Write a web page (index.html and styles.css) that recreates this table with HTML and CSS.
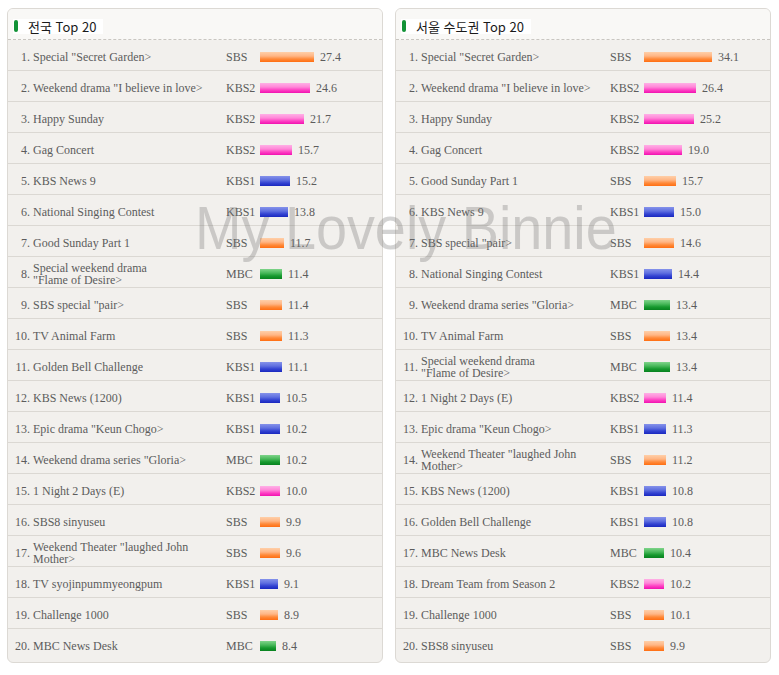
FILE: index.html
```html
<!DOCTYPE html>
<html lang="ko">
<head>
<meta charset="utf-8">
<title>Top 20</title>
<link rel="stylesheet" href="styles.css">
</head>
<body>
<div class="page">
  <section class="panel">
    <header class="panel-head"><span class="label"><i class="pill"></i>전국 Top 20</span></header>
    <div class="rows">
      <div class="row"><span class="num">1.</span><span class="title">Special "Secret Garden&gt;</span><span class="ch">SBS</span><span class="val"><i class="bar sbs" style="width:54px"></i>27.4</span></div>
      <div class="row"><span class="num">2.</span><span class="title">Weekend drama "I believe in love&gt;</span><span class="ch">KBS2</span><span class="val"><i class="bar kbs2" style="width:50px"></i>24.6</span></div>
      <div class="row"><span class="num">3.</span><span class="title">Happy Sunday</span><span class="ch">KBS2</span><span class="val"><i class="bar kbs2" style="width:44px"></i>21.7</span></div>
      <div class="row"><span class="num">4.</span><span class="title">Gag Concert</span><span class="ch">KBS2</span><span class="val"><i class="bar kbs2" style="width:32px"></i>15.7</span></div>
      <div class="row"><span class="num">5.</span><span class="title">KBS News 9</span><span class="ch">KBS1</span><span class="val"><i class="bar kbs1" style="width:30px"></i>15.2</span></div>
      <div class="row"><span class="num">6.</span><span class="title">National Singing Contest</span><span class="ch">KBS1</span><span class="val"><i class="bar kbs1" style="width:28px"></i>13.8</span></div>
      <div class="row"><span class="num">7.</span><span class="title">Good Sunday Part 1</span><span class="ch">SBS</span><span class="val"><i class="bar sbs" style="width:24px"></i>11.7</span></div>
      <div class="row"><span class="num">8.</span><span class="title">Special weekend drama<br>"Flame of Desire&gt;</span><span class="ch">MBC</span><span class="val"><i class="bar mbc" style="width:22px"></i>11.4</span></div>
      <div class="row"><span class="num">9.</span><span class="title">SBS special "pair&gt;</span><span class="ch">SBS</span><span class="val"><i class="bar sbs" style="width:22px"></i>11.4</span></div>
      <div class="row"><span class="num">10.</span><span class="title">TV Animal Farm</span><span class="ch">SBS</span><span class="val"><i class="bar sbs" style="width:22px"></i>11.3</span></div>
      <div class="row"><span class="num">11.</span><span class="title">Golden Bell Challenge</span><span class="ch">KBS1</span><span class="val"><i class="bar kbs1" style="width:22px"></i>11.1</span></div>
      <div class="row"><span class="num">12.</span><span class="title">KBS News (1200)</span><span class="ch">KBS1</span><span class="val"><i class="bar kbs1" style="width:20px"></i>10.5</span></div>
      <div class="row"><span class="num">13.</span><span class="title">Epic drama "Keun Chogo&gt;</span><span class="ch">KBS1</span><span class="val"><i class="bar kbs1" style="width:20px"></i>10.2</span></div>
      <div class="row"><span class="num">14.</span><span class="title">Weekend drama series "Gloria&gt;</span><span class="ch">MBC</span><span class="val"><i class="bar mbc" style="width:20px"></i>10.2</span></div>
      <div class="row"><span class="num">15.</span><span class="title">1 Night 2 Days (E)</span><span class="ch">KBS2</span><span class="val"><i class="bar kbs2" style="width:20px"></i>10.0</span></div>
      <div class="row"><span class="num">16.</span><span class="title">SBS8 sinyuseu</span><span class="ch">SBS</span><span class="val"><i class="bar sbs" style="width:20px"></i>9.9</span></div>
      <div class="row"><span class="num">17.</span><span class="title">Weekend Theater "laughed John<br>Mother&gt;</span><span class="ch">SBS</span><span class="val"><i class="bar sbs" style="width:20px"></i>9.6</span></div>
      <div class="row"><span class="num">18.</span><span class="title">TV syojinpummyeongpum</span><span class="ch">KBS1</span><span class="val"><i class="bar kbs1" style="width:18px"></i>9.1</span></div>
      <div class="row"><span class="num">19.</span><span class="title">Challenge 1000</span><span class="ch">SBS</span><span class="val"><i class="bar sbs" style="width:18px"></i>8.9</span></div>
      <div class="row"><span class="num">20.</span><span class="title">MBC News Desk</span><span class="ch">MBC</span><span class="val"><i class="bar mbc" style="width:16px"></i>8.4</span></div>
    </div>
  </section>
  <section class="panel panel-right">
    <header class="panel-head"><span class="label"><i class="pill"></i>서울 수도권 Top 20</span></header>
    <div class="rows">
      <div class="row"><span class="num">1.</span><span class="title">Special "Secret Garden&gt;</span><span class="ch">SBS</span><span class="val"><i class="bar sbs" style="width:68px"></i>34.1</span></div>
      <div class="row"><span class="num">2.</span><span class="title">Weekend drama "I believe in love&gt;</span><span class="ch">KBS2</span><span class="val"><i class="bar kbs2" style="width:52px"></i>26.4</span></div>
      <div class="row"><span class="num">3.</span><span class="title">Happy Sunday</span><span class="ch">KBS2</span><span class="val"><i class="bar kbs2" style="width:50px"></i>25.2</span></div>
      <div class="row"><span class="num">4.</span><span class="title">Gag Concert</span><span class="ch">KBS2</span><span class="val"><i class="bar kbs2" style="width:38px"></i>19.0</span></div>
      <div class="row"><span class="num">5.</span><span class="title">Good Sunday Part 1</span><span class="ch">SBS</span><span class="val"><i class="bar sbs" style="width:32px"></i>15.7</span></div>
      <div class="row"><span class="num">6.</span><span class="title">KBS News 9</span><span class="ch">KBS1</span><span class="val"><i class="bar kbs1" style="width:30px"></i>15.0</span></div>
      <div class="row"><span class="num">7.</span><span class="title">SBS special "pair&gt;</span><span class="ch">SBS</span><span class="val"><i class="bar sbs" style="width:30px"></i>14.6</span></div>
      <div class="row"><span class="num">8.</span><span class="title">National Singing Contest</span><span class="ch">KBS1</span><span class="val"><i class="bar kbs1" style="width:28px"></i>14.4</span></div>
      <div class="row"><span class="num">9.</span><span class="title">Weekend drama series "Gloria&gt;</span><span class="ch">MBC</span><span class="val"><i class="bar mbc" style="width:26px"></i>13.4</span></div>
      <div class="row"><span class="num">10.</span><span class="title">TV Animal Farm</span><span class="ch">SBS</span><span class="val"><i class="bar sbs" style="width:26px"></i>13.4</span></div>
      <div class="row"><span class="num">11.</span><span class="title">Special weekend drama<br>"Flame of Desire&gt;</span><span class="ch">MBC</span><span class="val"><i class="bar mbc" style="width:26px"></i>13.4</span></div>
      <div class="row"><span class="num">12.</span><span class="title">1 Night 2 Days (E)</span><span class="ch">KBS2</span><span class="val"><i class="bar kbs2" style="width:22px"></i>11.4</span></div>
      <div class="row"><span class="num">13.</span><span class="title">Epic drama "Keun Chogo&gt;</span><span class="ch">KBS1</span><span class="val"><i class="bar kbs1" style="width:22px"></i>11.3</span></div>
      <div class="row"><span class="num">14.</span><span class="title">Weekend Theater "laughed John<br>Mother&gt;</span><span class="ch">SBS</span><span class="val"><i class="bar sbs" style="width:22px"></i>11.2</span></div>
      <div class="row"><span class="num">15.</span><span class="title">KBS News (1200)</span><span class="ch">KBS1</span><span class="val"><i class="bar kbs1" style="width:22px"></i>10.8</span></div>
      <div class="row"><span class="num">16.</span><span class="title">Golden Bell Challenge</span><span class="ch">KBS1</span><span class="val"><i class="bar kbs1" style="width:22px"></i>10.8</span></div>
      <div class="row"><span class="num">17.</span><span class="title">MBC News Desk</span><span class="ch">MBC</span><span class="val"><i class="bar mbc" style="width:20px"></i>10.4</span></div>
      <div class="row"><span class="num">18.</span><span class="title">Dream Team from Season 2</span><span class="ch">KBS2</span><span class="val"><i class="bar kbs2" style="width:20px"></i>10.2</span></div>
      <div class="row"><span class="num">19.</span><span class="title">Challenge 1000</span><span class="ch">SBS</span><span class="val"><i class="bar sbs" style="width:20px"></i>10.1</span></div>
      <div class="row"><span class="num">20.</span><span class="title">SBS8 sinyuseu</span><span class="ch">SBS</span><span class="val"><i class="bar sbs" style="width:20px"></i>9.9</span></div>
    </div>
  </section>
  <div class="watermark">My Lovely Binnie</div>
</div>
</body>
</html>
```

FILE: styles.css
```css
html, body {
  margin: 0;
  padding: 0;
  background: #ffffff;
}

.page {
  position: relative;
  display: flex;
  gap: 12px;
  padding: 8px 0 0 7px;
  width: 779px;
  box-sizing: border-box;
}

.panel {
  width: 376px;
  box-sizing: border-box;
  border: 1px solid #dcd9d4;
  border-radius: 6px;
  background: #f2f0ed;
  overflow: hidden;
  padding-bottom: 3px;
}

.panel-head {
  height: 31px;
  background: #f9f8f6;
  border-bottom: 1px dashed #c9c6c1;
  padding: 9px 0 0 5px;
  box-sizing: border-box;
}

.label {
  display: inline-flex;
  align-items: center;
  height: 15px;
  background: #ffffff;
  padding-right: 7px;
  font-family: "Noto Sans CJK KR", "Noto Sans", sans-serif;
  font-size: 13px;
  color: #1a1a1a;
  line-height: 15px;
}

.pill {
  display: inline-block;
  width: 4px;
  height: 12px;
  border-radius: 2px;
  background: #129236;
  margin: 0 10px 0 1px;
}

.row {
  display: grid;
  grid-template-columns: 22px 196px 34px 1fr;
  align-items: center;
  height: 31px;
  padding-top: 4px;
  box-sizing: border-box;
  border-bottom: 1px solid #dbd8d3;
  font-family: "Liberation Serif", "Times New Roman", serif;
  font-size: 12px;
  color: #5c5c5c;
}

.row:last-child {
  border-bottom: none;
  height: 30px;
}

.panel-right .row {
  grid-template-columns: 22px 192px 34px 1fr;
}

.num {
  text-align: right;
}

.title {
  padding-left: 3px;
  line-height: 12px;
}

.val {
  display: flex;
  align-items: center;
}

.bar {
  display: inline-block;
  height: 10px;
  margin-right: 6px;
}

.sbs {
  background: linear-gradient(to bottom, #ffcfa8 0%, #ffb685 40%, #ff8a3a 70%, #ff6e12 100%);
}

.kbs2 {
  background: linear-gradient(to bottom, #ffb0e6 0%, #ff88d8 40%, #ff40c4 70%, #f012b0 100%);
}

.kbs1 {
  background: linear-gradient(to bottom, #8592ea 0%, #6070e0 40%, #3343d2 70%, #1a28bf 100%);
}

.mbc {
  background: linear-gradient(to bottom, #7fd48a 0%, #48b85a 40%, #16992e 70%, #08821f 100%);
}

.watermark {
  position: absolute;
  left: 195px;
  top: 197px;
  font-family: "Liberation Sans", Arial, sans-serif;
  font-size: 62px;
  line-height: 62px;
  color: rgba(110, 110, 110, 0.3);
  white-space: nowrap;
  transform: scaleX(0.9);
  transform-origin: left top;
  pointer-events: none;
}
```
